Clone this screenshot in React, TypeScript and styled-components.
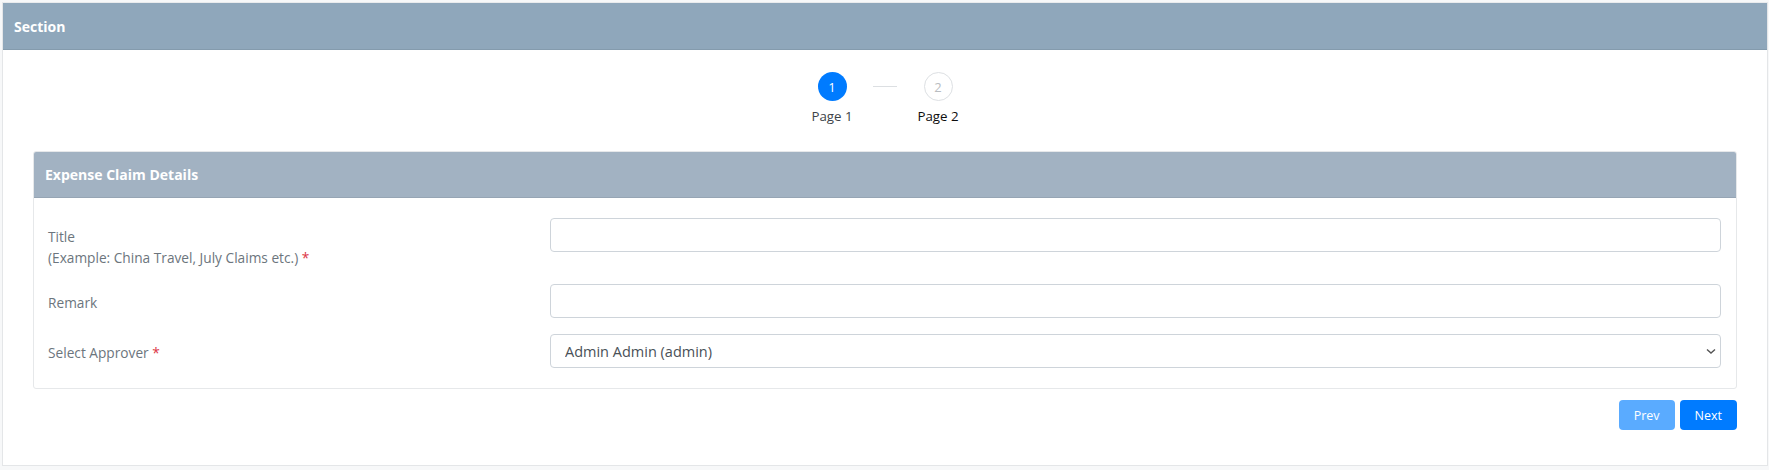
import React from 'react';
import styled, { createGlobalStyle } from 'styled-components';

const GlobalStyle = createGlobalStyle`
  html, body { margin: 0; padding: 0; }
  body {
    background: #f7f8f9;
    font-family: "Open Sans", "Noto Sans", "Liberation Sans", sans-serif;
    font-size: 14px;
    color: #212529;
  }
  * { box-sizing: border-box; }
`;

const Page = styled.div`
  padding: 2px 1px 0 2px;
  height: 470px;
`;

const Panel = styled.section`
  background: #fff;
  border: 1px solid #e4e6e8;
  border-top-color: #e9ebed;
  height: 464px;
  display: flex;
  flex-direction: column;
`;

const PanelHeader = styled.header<{ $tone: string; $height: number }>`
  background: ${p => p.$tone};
  color: #fff;
  font-weight: 700;
  font-size: 14px;
  height: ${p => p.$height}px;
  flex-shrink: 0;
  padding: 0 11px;
  display: flex;
  align-items: center;
  border-bottom: 1px solid rgba(0, 0, 0, 0.07);
`;

const PanelBody = styled.div`
  padding: 22px 30px 0 30px;
  display: flex;
  flex-direction: column;
`;

const Stepper = styled.div`
  display: flex;
  justify-content: center;
  align-items: flex-start;
  margin-bottom: 26px;
`;

const Step = styled.div`
  display: flex;
  flex-direction: column;
  align-items: center;
  width: 80px;
`;

const Bubble = styled.div<{ $active?: boolean }>`
  width: 29px;
  height: 29px;
  border-radius: 50%;
  display: flex;
  align-items: center;
  justify-content: center;
  font-size: 13px;
  background: ${p => (p.$active ? '#007bff' : '#fff')};
  color: ${p => (p.$active ? '#fff' : '#b9bdc1')};
  border: ${p => (p.$active ? 'none' : '1.5px solid #dde0e3')};
`;

const StepLabel = styled.div<{ $active?: boolean }>`
  margin-top: 6px;
  font-size: 13.3px;
  line-height: 18px;
  color: ${p => (p.$active ? '#3d4348' : '#0d0d0d')};
`;

const Connector = styled.div`
  width: 24px;
  height: 1px;
  background: #dcdfe2;
  margin: 14px 1px 0;
`;

const Card = styled.div`
  border: 1px solid #e6e8ea;
  border-radius: 3px;
  overflow: hidden;
`;

const CardBody = styled.div`
  padding: 20px 15px 20px 14px;
  display: flex;
  flex-direction: column;
  gap: 16px;
`;

const FormRow = styled.div`
  display: grid;
  grid-template-columns: 502px 1fr;
  align-items: start;
`;

const Label = styled.label`
  color: #6c757d;
  font-size: 13.7px;
  line-height: 21px;
  padding-top: 8px;
`;

const Required = styled.span`
  color: #dc3545;
`;

const TextInput = styled.input`
  height: 34px;
  width: 100%;
  border: 1px solid #ced4da;
  border-radius: 4px;
  padding: 0 14px;
  font: inherit;
  font-size: 14.5px;
  color: #495057;
  outline: none;
`;

const SelectWrap = styled.div`
  position: relative;
`;

const Select = styled.select`
  appearance: none;
  height: 34px;
  width: 100%;
  border: 1px solid #ced4da;
  border-radius: 4px;
  padding: 0 14px;
  font: inherit;
  font-size: 14.5px;
  color: #495057;
  background: #fff;
  outline: none;
`;

const Caret = styled.svg`
  position: absolute;
  right: 4px;
  top: 14px;
  pointer-events: none;
`;

const Actions = styled.div`
  display: flex;
  justify-content: flex-end;
  gap: 5px;
  margin-top: 11px;
`;

const Button = styled.button<{ $muted?: boolean }>`
  height: 30px;
  padding: 0 15px;
  border: none;
  border-radius: 4px;
  font: inherit;
  font-size: 12.5px;
  color: #fff;
  background: ${p => (p.$muted ? '#5aabff' : '#007bff')};
  cursor: pointer;
`;

export default function App() {
  return (
    <>
      <GlobalStyle />
      <Page>
        <Panel>
          <PanelHeader $tone="#8fa7bb" $height={47}>Section</PanelHeader>
          <PanelBody>
            <Stepper>
              <Step>
                <Bubble $active>1</Bubble>
                <StepLabel $active>Page 1</StepLabel>
              </Step>
              <Connector />
              <Step>
                <Bubble>2</Bubble>
                <StepLabel>Page 2</StepLabel>
              </Step>
            </Stepper>

            <Card>
              <PanelHeader $tone="#a2b2c2" $height={46}>Expense Claim Details</PanelHeader>
              <CardBody>
                <FormRow>
                  <Label>
                    Title
                    <br />
                    (Example: China Travel, July Claims etc.) <Required>*</Required>
                  </Label>
                  <TextInput type="text" />
                </FormRow>
                <FormRow>
                  <Label>Remark</Label>
                  <TextInput type="text" />
                </FormRow>
                <FormRow>
                  <Label>
                    Select Approver <Required>*</Required>
                  </Label>
                  <SelectWrap>
                    <Select defaultValue="admin">
                      <option value="admin">Admin Admin (admin)</option>
                    </Select>
                    <Caret width="12" height="7" viewBox="0 0 12 7">
                      <path d="M2 1.5 L6 5 L10 1.5" fill="none" stroke="#555" strokeWidth="1.4" />
                    </Caret>
                  </SelectWrap>
                </FormRow>
              </CardBody>
            </Card>

            <Actions>
              <Button $muted>Prev</Button>
              <Button>Next</Button>
            </Actions>
          </PanelBody>
        </Panel>
      </Page>
    </>
  );
}
